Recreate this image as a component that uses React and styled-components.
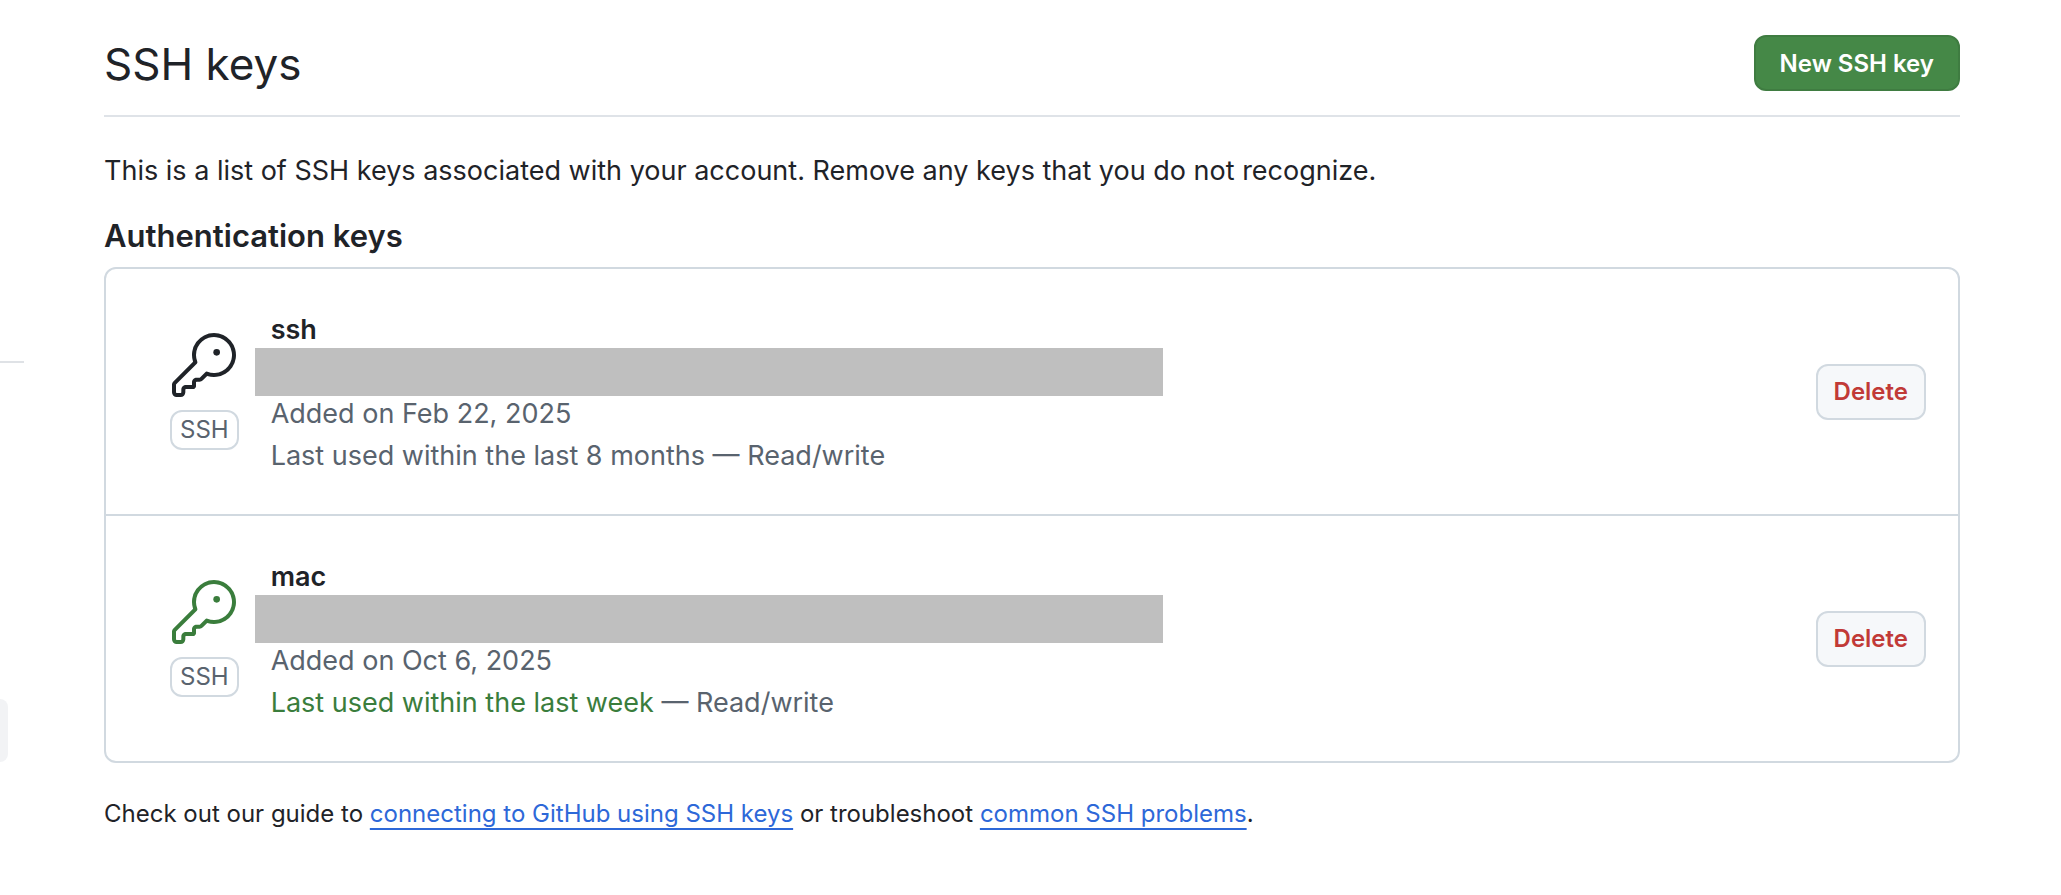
import React from "react";
import styled, { createGlobalStyle } from "styled-components";

const GlobalStyle = createGlobalStyle`
  *, *::before, *::after { box-sizing: border-box; }
  body {
    margin: 0;
    background: #fff;
    color: #1f2328;
    font-family: Inter, "Liberation Sans", sans-serif;
    font-size: 27px;
    line-height: 42px;
  }
`;

const Page = styled.div`
  display: flex;
  align-items: flex-start;
  min-height: 100vh;
`;

const Sidebar = styled.nav`
  flex: 0 0 24px;
  padding-top: 361px;
`;

const SidebarDivider = styled.hr`
  height: 2px;
  margin: 0 0 336px;
  border: 0;
  background: #dfe2e6;
`;

const SidebarItem = styled.div`
  width: 8px;
  height: 63px;
  border-radius: 0 12px 12px 0;
  background: #f2f3f5;
`;

const Main = styled.main`
  flex: 1;
  min-width: 0;
  padding: 35px 101px 40px 80px;
`;

const Header = styled.header`
  display: flex;
  align-items: flex-start;
  justify-content: space-between;
  padding-bottom: 22px;
  border-bottom: 2px solid #dfe3e8;
`;

const Title = styled.h1`
  margin: 0;
  font-size: 44px;
  font-weight: 400;
  line-height: 58px;
`;

const Button = styled.button`
  flex: none;
  height: 56px;
  padding: 1px ${(p) => (p.$primary ? 24 : 16)}px 0;
  border: 2px solid ${(p) => (p.$primary ? "#3f7c41" : "#d1d9e0")};
  border-radius: 12px;
  background: ${(p) => (p.$primary ? "#458847" : "#f6f8fa")};
  color: ${(p) => (p.$primary ? "#fff" : "#c13a37")};
  font-family: inherit;
  font-size: 24px;
  font-weight: 600;
  line-height: 40px;
  white-space: nowrap;
  cursor: pointer;
`;

const Intro = styled.p`
  margin: 33px 0 0;
`;

const SectionTitle = styled.h2`
  margin: 20px 0 7px;
  font-size: 31px;
  font-weight: 600;
  line-height: 48px;
`;

const KeyList = styled.ul`
  margin: 0;
  padding: 0;
  border: 2px solid #d1d9e0;
  border-radius: 12px;
  list-style: none;
`;

const KeyRow = styled.li`
  display: flex;
  align-items: center;
  gap: 32px;
  min-height: 245px;
  padding: 32px 32px 32px 64px;

  & + & {
    min-height: 247px;
    border-top: 2px solid #d1d9e0;
  }
`;

const KeyBadge = styled.div`
  flex: none;
  display: flex;
  flex-direction: column;
  align-items: center;
  gap: 13px;
  color: ${(p) => (p.$active ? "#3a7d3c" : "#1f2328")};
`;

const KeyTag = styled.span`
  padding: 0 8px;
  border: 2px solid #d1d9e0;
  border-radius: 12px;
  color: #59636e;
  font-size: 24px;
  line-height: 36px;
`;

const KeyDetails = styled.div`
  flex: 1;
  min-width: 0;
  padding-top: 2px;
  color: #59636e;
`;

const KeyName = styled.strong`
  display: block;
  color: #1f2328;
  font-weight: 600;
`;

const RedactedHash = styled.div`
  width: 908px;
  max-width: 100%;
  height: 48px;
  margin: -3px 0 -3px -16px;
  background: #bfbfbf;
`;

const Line = styled.span`
  display: block;
`;

const Usage = styled.span`
  color: ${(p) => (p.$active ? "#3a7d3c" : "inherit")};
`;

const Footnote = styled.p`
  margin: 33px 0 0;
  font-size: 24px;
  line-height: 36px;
`;

const Link = styled.a`
  color: #2d68d8;
  text-decoration: underline;
  text-decoration-thickness: 2px;
  text-underline-offset: 6px;
  text-decoration-skip-ink: none;
`;

function KeyIcon() {
  return (
    <svg width="64" height="64" viewBox="0 0 24 24" fill="currentColor" aria-hidden="true">
      <path d="M16.75 8.5a1.25 1.25 0 1 0 0-2.5 1.25 1.25 0 0 0 0 2.5Z" />
      <path d="M15.75 0a8.25 8.25 0 1 1-2.541 16.101l-1.636 1.636a1.744 1.744 0 0 1-1.237.513H9.25a.25.25 0 0 0-.25.25v1.448a.876.876 0 0 1-.256.619l-.214.213a.75.75 0 0 1-.545.22H5.25a.25.25 0 0 0-.25.25v1A1.75 1.75 0 0 1 3.25 24h-1.5A1.75 1.75 0 0 1 0 22.25v-2.836c0-.464.185-.908.513-1.236l7.386-7.388A8.249 8.249 0 0 1 15.75 0ZM9 8.25a6.733 6.733 0 0 0 .463 2.462.75.75 0 0 1-.168.804l-7.722 7.721a.25.25 0 0 0-.073.177v2.836c0 .138.112.25.25.25h1.5a.25.25 0 0 0 .25-.25v-1c0-.966.784-1.75 1.75-1.75H7.5v-1c0-.966.784-1.75 1.75-1.75h1.086a.25.25 0 0 0 .177-.073l1.971-1.972a.75.75 0 0 1 .804-.168A6.75 6.75 0 1 0 9 8.25Z" />
    </svg>
  );
}

const keys = [
  { name: "ssh", added: "Feb 22, 2025", used: "Last used within the last 8 months", active: false },
  { name: "mac", added: "Oct 6, 2025", used: "Last used within the last week", active: true },
];

function KeyItem({ item }) {
  return (
    <KeyRow>
      <KeyBadge $active={item.active}>
        <KeyIcon />
        <KeyTag>SSH</KeyTag>
      </KeyBadge>
      <KeyDetails>
        <KeyName>{item.name}</KeyName>
        <RedactedHash />
        <Line>Added on {item.added}</Line>
        <Line>
          <Usage $active={item.active}>{item.used}</Usage> — Read/write
        </Line>
      </KeyDetails>
      <Button type="button">Delete</Button>
    </KeyRow>
  );
}

export default function App() {
  return (
    <Page>
      <GlobalStyle />
      <Sidebar>
        <SidebarDivider />
        <SidebarItem />
      </Sidebar>
      <Main>
        <Header>
          <Title>SSH keys</Title>
          <Button type="button" $primary>New SSH key</Button>
        </Header>
        <Intro>
          This is a list of SSH keys associated with your account. Remove any keys that you do not recognize.
        </Intro>
        <SectionTitle>Authentication keys</SectionTitle>
        <KeyList>
          {keys.map((item) => (
            <KeyItem key={item.name} item={item} />
          ))}
        </KeyList>
        <Footnote>
          Check out our guide to <Link href="#guide">connecting to GitHub using SSH keys</Link> or
          troubleshoot <Link href="#problems">common SSH problems</Link>.
        </Footnote>
      </Main>
    </Page>
  );
}
